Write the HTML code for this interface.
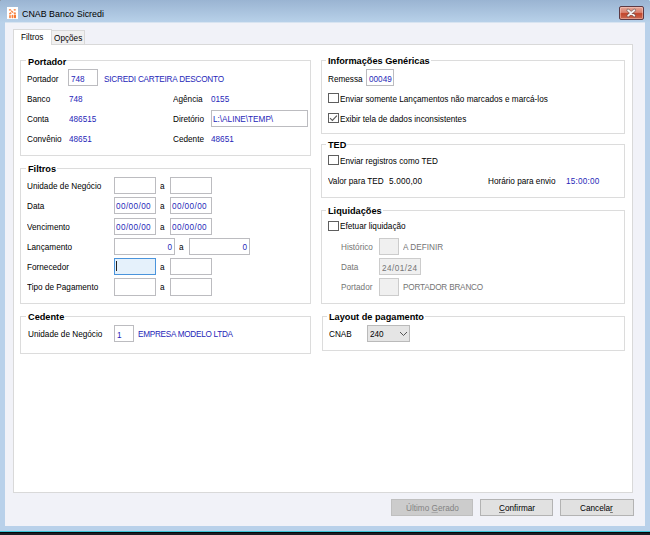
<!DOCTYPE html>
<html><head><meta charset="utf-8"><style>
html,body{margin:0;padding:0;width:650px;height:535px;overflow:hidden;background:#b9d1ea;}
body{position:relative;font-family:"Liberation Sans",sans-serif;}
div,svg{position:absolute;}
</style></head><body>
<div style="position:absolute;left:0px;top:0px;width:650px;height:23px;background:linear-gradient(#9ab4d2,#b9d2ea);"></div>
<div style="position:absolute;left:0px;top:23px;width:650px;height:512px;background:#b9d1ea;"></div>
<div style="position:absolute;left:5px;top:22px;width:640px;height:1px;background:#d8e4f1;"></div>
<div style="position:absolute;left:5px;top:23px;width:640px;height:503px;background:#f1f2f8;"></div>
<div style="position:absolute;left:0px;top:531px;width:650px;height:1px;background:#3cc6d8;"></div>
<div style="position:absolute;left:0px;top:0px;width:1px;height:1px;background:#8d98a6;"></div>
<div style="position:absolute;left:649px;top:0px;width:1px;height:1px;background:#b5e2ef;"></div>
<div style="position:absolute;left:0px;top:532px;width:650px;height:3px;background:#1b1e24;"></div>
<div style="position:absolute;left:0px;top:532px;width:650px;height:1px;background:#0a0508;"></div>
<div style="position:absolute;left:7px;top:7px;width:11px;height:12px;background:#fff;"></div>
<svg style="position:absolute;left:7px;top:7px" width="11" height="12"><g fill="#f7742a"><ellipse cx="3" cy="2.8" rx="1.2" ry="0.9" opacity="0.8"/><ellipse cx="7.8" cy="2.8" rx="1.2" ry="0.9" opacity="0.8"/><path d="M4.6 3.2 L6.6 5.2 L5.6 6 L3.8 4.2Z" opacity="0.9"/><path d="M2 6.2 L4 5 L4.6 6.6 L2.6 7.8Z" opacity="0.9"/><ellipse cx="7.8" cy="6.2" rx="1.2" ry="1" opacity="0.85"/><rect x="2" y="8" width="2" height="3.3" rx="0.8" opacity="0.75"/><rect x="4.6" y="7.8" width="1.8" height="3.5" rx="0.8" opacity="0.9"/><rect x="7" y="7.6" width="2" height="3.7" rx="0.8"/></g></svg>
<div style="position:absolute;left:22px;top:9.97px;font-size:8.9px;line-height:8.9px;color:#000;font-weight:normal;white-space:nowrap;transform:scaleX(1);transform-origin:0 0;letter-spacing:0px;">CNAB Banco Sicredi</div>
<div style="position:absolute;left:619px;top:6px;width:25px;height:14px;box-sizing:border-box;border:1px solid #5c3a44;border-radius:2px;box-shadow:inset 0 0 0 1px rgba(255,215,205,0.45);background:linear-gradient(#e5a598 0%,#d9826f 45%,#c2452b 55%,#cb6a52 100%);"></div>
<svg style="position:absolute;left:619px;top:6px" width="25" height="14"><path d="M9 4.2 L15.5 9.8 M15.5 4.2 L9 9.8" stroke="#555" stroke-width="3.2" stroke-linecap="round" opacity="0.55"/><path d="M9.2 4.4 L15.3 9.6 M15.3 4.4 L9.2 9.6" stroke="#f4f4f4" stroke-width="1.9" stroke-linecap="round"/></svg>
<div style="position:absolute;left:13px;top:44px;width:620px;height:449px;box-sizing:border-box;background:#fff;border:1px solid #d9d9d9;"></div>
<div style="position:absolute;left:51px;top:30px;width:34px;height:15px;box-sizing:border-box;background:#f0f0f0;border:1px solid #d9d9d9;"></div>
<div style="position:absolute;left:13px;top:29px;width:39px;height:16px;box-sizing:border-box;background:#fff;border:1px solid #d9d9d9;border-bottom:none;"></div>
<div style="position:absolute;left:21px;top:32.55px;font-size:8.8px;line-height:8.8px;color:#000;font-weight:normal;white-space:nowrap;transform:scaleX(0.932);transform-origin:0 0;letter-spacing:0px;">Filtros</div>
<div style="position:absolute;left:54px;top:34.05px;font-size:8.8px;line-height:8.8px;color:#000;font-weight:normal;white-space:nowrap;transform:scaleX(0.932);transform-origin:0 0;letter-spacing:0px;">Opções</div>
<div style="position:absolute;left:20px;top:60px;width:291px;height:96px;box-sizing:border-box;background:transparent;border:1px solid #dcdcdc;"></div>
<div style="position:absolute;left:26px;top:57.71px;font-size:9.2px;line-height:9.2px;color:#000;font-weight:bold;white-space:nowrap;transform:scaleX(1);transform-origin:0 0;letter-spacing:0px;background:#fff;padding:0 1px 0 2px;">Portador</div>
<div style="position:absolute;left:27px;top:74.55px;font-size:8.8px;line-height:8.8px;color:#000;font-weight:normal;white-space:nowrap;transform:scaleX(0.932);transform-origin:0 0;letter-spacing:0px;">Portador</div>
<div style="position:absolute;left:68px;top:69px;width:30px;height:17px;box-sizing:border-box;background:#fff;border:1px solid #bcbcc0;"></div>
<div style="position:absolute;left:71px;top:74.81px;font-size:9.2px;line-height:9.2px;color:#2626b8;font-weight:normal;white-space:nowrap;transform:scaleX(0.891);transform-origin:0 0;letter-spacing:0px;">748</div>
<div style="position:absolute;left:104px;top:74.55px;font-size:8.8px;line-height:8.8px;color:#2626b8;font-weight:normal;white-space:nowrap;transform:scaleX(0.932);transform-origin:0 0;letter-spacing:-0.22px;">SICREDI CARTEIRA DESCONTO</div>
<div style="position:absolute;left:27px;top:94.55px;font-size:8.8px;line-height:8.8px;color:#000;font-weight:normal;white-space:nowrap;transform:scaleX(0.932);transform-origin:0 0;letter-spacing:0px;">Banco</div>
<div style="position:absolute;left:69px;top:94.81px;font-size:9.2px;line-height:9.2px;color:#2626b8;font-weight:normal;white-space:nowrap;transform:scaleX(0.891);transform-origin:0 0;letter-spacing:0px;">748</div>
<div style="position:absolute;left:27px;top:114.55px;font-size:8.8px;line-height:8.8px;color:#000;font-weight:normal;white-space:nowrap;transform:scaleX(0.932);transform-origin:0 0;letter-spacing:0px;">Conta</div>
<div style="position:absolute;left:69px;top:114.81px;font-size:9.2px;line-height:9.2px;color:#2626b8;font-weight:normal;white-space:nowrap;transform:scaleX(0.891);transform-origin:0 0;letter-spacing:0px;">486515</div>
<div style="position:absolute;left:27px;top:134.55px;font-size:8.8px;line-height:8.8px;color:#000;font-weight:normal;white-space:nowrap;transform:scaleX(0.932);transform-origin:0 0;letter-spacing:0px;">Convênio</div>
<div style="position:absolute;left:69px;top:134.81px;font-size:9.2px;line-height:9.2px;color:#2626b8;font-weight:normal;white-space:nowrap;transform:scaleX(0.891);transform-origin:0 0;letter-spacing:0px;">48651</div>
<div style="position:absolute;left:173px;top:94.55px;font-size:8.8px;line-height:8.8px;color:#000;font-weight:normal;white-space:nowrap;transform:scaleX(0.932);transform-origin:0 0;letter-spacing:0px;">Agência</div>
<div style="position:absolute;left:211px;top:94.81px;font-size:9.2px;line-height:9.2px;color:#2626b8;font-weight:normal;white-space:nowrap;transform:scaleX(0.891);transform-origin:0 0;letter-spacing:0px;">0155</div>
<div style="position:absolute;left:173px;top:114.55px;font-size:8.8px;line-height:8.8px;color:#000;font-weight:normal;white-space:nowrap;transform:scaleX(0.932);transform-origin:0 0;letter-spacing:0px;">Diretório</div>
<div style="position:absolute;left:211px;top:110px;width:97px;height:17px;box-sizing:border-box;background:#fff;border:1px solid #bcbcc0;"></div>
<div style="position:absolute;left:212.5px;top:115.15px;font-size:8.8px;line-height:8.8px;color:#2626b8;font-weight:normal;white-space:nowrap;transform:scaleX(0.932);transform-origin:0 0;letter-spacing:0px;">L:\ALINE\TEMP\</div>
<div style="position:absolute;left:173px;top:134.55px;font-size:8.8px;line-height:8.8px;color:#000;font-weight:normal;white-space:nowrap;transform:scaleX(0.932);transform-origin:0 0;letter-spacing:0px;">Cedente</div>
<div style="position:absolute;left:211px;top:134.81px;font-size:9.2px;line-height:9.2px;color:#2626b8;font-weight:normal;white-space:nowrap;transform:scaleX(0.891);transform-origin:0 0;letter-spacing:0px;">48651</div>
<div style="position:absolute;left:20px;top:168px;width:291px;height:136px;box-sizing:border-box;background:transparent;border:1px solid #dcdcdc;"></div>
<div style="position:absolute;left:26px;top:164.71px;font-size:9.2px;line-height:9.2px;color:#000;font-weight:bold;white-space:nowrap;transform:scaleX(1);transform-origin:0 0;letter-spacing:0px;background:#fff;padding:0 1px 0 2px;">Filtros</div>
<div style="position:absolute;left:27px;top:181.55px;font-size:8.8px;line-height:8.8px;color:#000;font-weight:normal;white-space:nowrap;transform:scaleX(0.932);transform-origin:0 0;letter-spacing:0px;">Unidade de Negócio</div>
<div style="position:absolute;left:114px;top:177px;width:42px;height:17px;box-sizing:border-box;background:#fff;border:1px solid #bcbcc0;"></div>
<div style="position:absolute;left:160px;top:181.55px;font-size:8.8px;line-height:8.8px;color:#000;font-weight:normal;white-space:nowrap;transform:scaleX(0.932);transform-origin:0 0;letter-spacing:0px;">a</div>
<div style="position:absolute;left:170px;top:177px;width:42px;height:17px;box-sizing:border-box;background:#fff;border:1px solid #bcbcc0;"></div>
<div style="position:absolute;left:27px;top:201.55px;font-size:8.8px;line-height:8.8px;color:#000;font-weight:normal;white-space:nowrap;transform:scaleX(0.932);transform-origin:0 0;letter-spacing:0px;">Data</div>
<div style="position:absolute;left:114px;top:197px;width:42px;height:17px;box-sizing:border-box;background:#fff;border:1px solid #bcbcc0;"></div>
<div style="position:absolute;left:160px;top:201.55px;font-size:8.8px;line-height:8.8px;color:#000;font-weight:normal;white-space:nowrap;transform:scaleX(0.932);transform-origin:0 0;letter-spacing:0px;">a</div>
<div style="position:absolute;left:170px;top:197px;width:42px;height:17px;box-sizing:border-box;background:#fff;border:1px solid #bcbcc0;"></div>
<div style="position:absolute;left:115.6px;top:202.31px;font-size:9.2px;line-height:9.2px;color:#2626b8;font-weight:normal;white-space:nowrap;transform:scaleX(0.891);transform-origin:0 0;letter-spacing:0.45px;">00/00/00</div>
<div style="position:absolute;left:172px;top:202.31px;font-size:9.2px;line-height:9.2px;color:#2626b8;font-weight:normal;white-space:nowrap;transform:scaleX(0.891);transform-origin:0 0;letter-spacing:0.45px;">00/00/00</div>
<div style="position:absolute;left:27px;top:222.55px;font-size:8.8px;line-height:8.8px;color:#000;font-weight:normal;white-space:nowrap;transform:scaleX(0.932);transform-origin:0 0;letter-spacing:0px;">Vencimento</div>
<div style="position:absolute;left:114px;top:218px;width:42px;height:17px;box-sizing:border-box;background:#fff;border:1px solid #bcbcc0;"></div>
<div style="position:absolute;left:160px;top:222.55px;font-size:8.8px;line-height:8.8px;color:#000;font-weight:normal;white-space:nowrap;transform:scaleX(0.932);transform-origin:0 0;letter-spacing:0px;">a</div>
<div style="position:absolute;left:170px;top:218px;width:42px;height:17px;box-sizing:border-box;background:#fff;border:1px solid #bcbcc0;"></div>
<div style="position:absolute;left:115.6px;top:223.31px;font-size:9.2px;line-height:9.2px;color:#2626b8;font-weight:normal;white-space:nowrap;transform:scaleX(0.891);transform-origin:0 0;letter-spacing:0.45px;">00/00/00</div>
<div style="position:absolute;left:172px;top:223.31px;font-size:9.2px;line-height:9.2px;color:#2626b8;font-weight:normal;white-space:nowrap;transform:scaleX(0.891);transform-origin:0 0;letter-spacing:0.45px;">00/00/00</div>
<div style="position:absolute;left:27px;top:242.55px;font-size:8.8px;line-height:8.8px;color:#000;font-weight:normal;white-space:nowrap;transform:scaleX(0.932);transform-origin:0 0;letter-spacing:0px;">Lançamento</div>
<div style="position:absolute;left:114px;top:238px;width:61px;height:17px;box-sizing:border-box;background:#fff;border:1px solid #bcbcc0;"></div>
<div style="position:absolute;right:477.5px;top:242.81px;font-size:9.2px;line-height:9.2px;color:#2626b8;font-weight:normal;white-space:nowrap;transform:scaleX(0.891);transform-origin:100% 0;letter-spacing:0px;">0</div>
<div style="position:absolute;left:179px;top:242.55px;font-size:8.8px;line-height:8.8px;color:#000;font-weight:normal;white-space:nowrap;transform:scaleX(0.932);transform-origin:0 0;letter-spacing:0px;">a</div>
<div style="position:absolute;left:189px;top:238px;width:61px;height:17px;box-sizing:border-box;background:#fff;border:1px solid #bcbcc0;"></div>
<div style="position:absolute;right:402.5px;top:242.81px;font-size:9.2px;line-height:9.2px;color:#2626b8;font-weight:normal;white-space:nowrap;transform:scaleX(0.891);transform-origin:100% 0;letter-spacing:0px;">0</div>
<div style="position:absolute;left:27px;top:262.55px;font-size:8.8px;line-height:8.8px;color:#000;font-weight:normal;white-space:nowrap;transform:scaleX(0.932);transform-origin:0 0;letter-spacing:0px;">Fornecedor</div>
<div style="position:absolute;left:114px;top:258px;width:42px;height:17px;box-sizing:border-box;background:#e5f1fb;border:1px solid #4a94dc;"></div>
<div style="position:absolute;left:116px;top:261px;width:1px;height:10px;background:#222;"></div>
<div style="position:absolute;left:160px;top:262.55px;font-size:8.8px;line-height:8.8px;color:#000;font-weight:normal;white-space:nowrap;transform:scaleX(0.932);transform-origin:0 0;letter-spacing:0px;">a</div>
<div style="position:absolute;left:170px;top:258px;width:42px;height:17px;box-sizing:border-box;background:#fff;border:1px solid #bcbcc0;"></div>
<div style="position:absolute;left:27px;top:282.55px;font-size:8.8px;line-height:8.8px;color:#000;font-weight:normal;white-space:nowrap;transform:scaleX(0.932);transform-origin:0 0;letter-spacing:0px;">Tipo de Pagamento</div>
<div style="position:absolute;left:114px;top:278px;width:42px;height:18px;box-sizing:border-box;background:#fff;border:1px solid #bcbcc0;"></div>
<div style="position:absolute;left:160px;top:282.55px;font-size:8.8px;line-height:8.8px;color:#000;font-weight:normal;white-space:nowrap;transform:scaleX(0.932);transform-origin:0 0;letter-spacing:0px;">a</div>
<div style="position:absolute;left:170px;top:278px;width:42px;height:18px;box-sizing:border-box;background:#fff;border:1px solid #bcbcc0;"></div>
<div style="position:absolute;left:20px;top:316px;width:291px;height:38px;box-sizing:border-box;background:transparent;border:1px solid #dcdcdc;"></div>
<div style="position:absolute;left:26px;top:312.71px;font-size:9.2px;line-height:9.2px;color:#000;font-weight:bold;white-space:nowrap;transform:scaleX(1);transform-origin:0 0;letter-spacing:0px;background:#fff;padding:0 1px 0 2px;">Cedente</div>
<div style="position:absolute;left:28px;top:329.55px;font-size:8.8px;line-height:8.8px;color:#000;font-weight:normal;white-space:nowrap;transform:scaleX(0.932);transform-origin:0 0;letter-spacing:0px;">Unidade de Negócio</div>
<div style="position:absolute;left:114px;top:325px;width:20px;height:17px;box-sizing:border-box;background:#fff;border:1px solid #bcbcc0;"></div>
<div style="position:absolute;left:117px;top:330.81px;font-size:9.2px;line-height:9.2px;color:#2626b8;font-weight:normal;white-space:nowrap;transform:scaleX(0.891);transform-origin:0 0;letter-spacing:0px;">1</div>
<div style="position:absolute;left:137.5px;top:329.55px;font-size:8.8px;line-height:8.8px;color:#2626b8;font-weight:normal;white-space:nowrap;transform:scaleX(0.932);transform-origin:0 0;letter-spacing:-0.3px;">EMPRESA MODELO LTDA</div>
<div style="position:absolute;left:321px;top:60px;width:304px;height:74px;box-sizing:border-box;background:transparent;border:1px solid #dcdcdc;"></div>
<div style="position:absolute;left:326px;top:56.71px;font-size:9.2px;line-height:9.2px;color:#000;font-weight:bold;white-space:nowrap;transform:scaleX(1);transform-origin:0 0;letter-spacing:0px;background:#fff;padding:0 1px 0 2px;">Informações Genéricas</div>
<div style="position:absolute;left:328px;top:74.55px;font-size:8.8px;line-height:8.8px;color:#000;font-weight:normal;white-space:nowrap;transform:scaleX(0.932);transform-origin:0 0;letter-spacing:0px;">Remessa</div>
<div style="position:absolute;left:366px;top:69px;width:28px;height:17px;box-sizing:border-box;background:#fff;border:1px solid #bcbcc0;"></div>
<div style="position:absolute;left:369px;top:75.21px;font-size:9.2px;line-height:9.2px;color:#2626b8;font-weight:normal;white-space:nowrap;transform:scaleX(0.891);transform-origin:0 0;letter-spacing:0px;">00049</div>
<div style="position:absolute;left:328px;top:93px;width:11px;height:10px;box-sizing:border-box;background:#fff;border:1px solid #5e5e5e;"></div>
<div style="position:absolute;left:340px;top:94.55px;font-size:8.8px;line-height:8.8px;color:#000;font-weight:normal;white-space:nowrap;transform:scaleX(0.932);transform-origin:0 0;letter-spacing:0px;">Enviar somente Lançamentos não marcados e marcá-los</div>
<div style="position:absolute;left:328px;top:113px;width:11px;height:10px;box-sizing:border-box;background:#fff;border:1px solid #5e5e5e;"></div>
<svg style="position:absolute;left:328px;top:113px" width="11" height="10"><path d="M2 5.2 L4.4 7.5 L8.9 2.6" fill="none" stroke="#5a5a5a" stroke-width="1.15"/></svg>
<div style="position:absolute;left:340px;top:114.55px;font-size:8.8px;line-height:8.8px;color:#000;font-weight:normal;white-space:nowrap;transform:scaleX(0.932);transform-origin:0 0;letter-spacing:0px;">Exibir tela de dados inconsistentes</div>
<div style="position:absolute;left:321px;top:144px;width:304px;height:54px;box-sizing:border-box;background:transparent;border:1px solid #dcdcdc;"></div>
<div style="position:absolute;left:326px;top:140.71px;font-size:9.2px;line-height:9.2px;color:#000;font-weight:bold;white-space:nowrap;transform:scaleX(1);transform-origin:0 0;letter-spacing:0px;background:#fff;padding:0 1px 0 2px;">TED</div>
<div style="position:absolute;left:328px;top:155px;width:11px;height:10px;box-sizing:border-box;background:#fff;border:1px solid #5e5e5e;"></div>
<div style="position:absolute;left:340px;top:156.55px;font-size:8.8px;line-height:8.8px;color:#000;font-weight:normal;white-space:nowrap;transform:scaleX(0.932);transform-origin:0 0;letter-spacing:0px;">Enviar registros como TED</div>
<div style="position:absolute;left:328px;top:176.55px;font-size:8.8px;line-height:8.8px;color:#000;font-weight:normal;white-space:nowrap;transform:scaleX(0.932);transform-origin:0 0;letter-spacing:0px;">Valor para TED</div>
<div style="position:absolute;left:389px;top:176.81px;font-size:9.2px;line-height:9.2px;color:#000;font-weight:normal;white-space:nowrap;transform:scaleX(0.891);transform-origin:0 0;letter-spacing:0.2px;">5.000,00</div>
<div style="position:absolute;left:488px;top:176.55px;font-size:8.8px;line-height:8.8px;color:#000;font-weight:normal;white-space:nowrap;transform:scaleX(0.932);transform-origin:0 0;letter-spacing:0px;">Horário para envio</div>
<div style="position:absolute;left:566px;top:176.81px;font-size:9.2px;line-height:9.2px;color:#2626b8;font-weight:normal;white-space:nowrap;transform:scaleX(0.891);transform-origin:0 0;letter-spacing:0.25px;">15:00:00</div>
<div style="position:absolute;left:321px;top:210px;width:304px;height:94px;box-sizing:border-box;background:transparent;border:1px solid #dcdcdc;"></div>
<div style="position:absolute;left:326px;top:206.71px;font-size:9.2px;line-height:9.2px;color:#000;font-weight:bold;white-space:nowrap;transform:scaleX(1);transform-origin:0 0;letter-spacing:0px;background:#fff;padding:0 1px 0 2px;">Liquidações</div>
<div style="position:absolute;left:328px;top:221px;width:11px;height:10px;box-sizing:border-box;background:#fff;border:1px solid #5e5e5e;"></div>
<div style="position:absolute;left:340px;top:222.05px;font-size:8.8px;line-height:8.8px;color:#000;font-weight:normal;white-space:nowrap;transform:scaleX(0.932);transform-origin:0 0;letter-spacing:0px;">Efetuar liquidação</div>
<div style="position:absolute;left:341px;top:242.55px;font-size:8.8px;line-height:8.8px;color:#747474;font-weight:normal;white-space:nowrap;transform:scaleX(0.932);transform-origin:0 0;letter-spacing:0px;">Histórico</div>
<div style="position:absolute;left:379px;top:238px;width:20px;height:17px;box-sizing:border-box;background:#f0f0f0;border:1px solid #cccccc;"></div>
<div style="position:absolute;left:403px;top:242.55px;font-size:8.8px;line-height:8.8px;color:#747474;font-weight:normal;white-space:nowrap;transform:scaleX(0.932);transform-origin:0 0;letter-spacing:0px;">A DEFINIR</div>
<div style="position:absolute;left:341px;top:262.55px;font-size:8.8px;line-height:8.8px;color:#747474;font-weight:normal;white-space:nowrap;transform:scaleX(0.932);transform-origin:0 0;letter-spacing:0px;">Data</div>
<div style="position:absolute;left:379px;top:258px;width:42px;height:17px;box-sizing:border-box;background:#f0f0f0;border:1px solid #cccccc;"></div>
<div style="position:absolute;left:381.5px;top:264.31px;font-size:9.2px;line-height:9.2px;color:#747474;font-weight:normal;white-space:nowrap;transform:scaleX(0.891);transform-origin:0 0;letter-spacing:0.5px;">24/01/24</div>
<div style="position:absolute;left:341px;top:282.55px;font-size:8.8px;line-height:8.8px;color:#747474;font-weight:normal;white-space:nowrap;transform:scaleX(0.932);transform-origin:0 0;letter-spacing:0px;">Portador</div>
<div style="position:absolute;left:379px;top:278px;width:20px;height:18px;box-sizing:border-box;background:#f0f0f0;border:1px solid #cccccc;"></div>
<div style="position:absolute;left:403px;top:283.05px;font-size:8.8px;line-height:8.8px;color:#747474;font-weight:normal;white-space:nowrap;transform:scaleX(0.932);transform-origin:0 0;letter-spacing:-0.22px;">PORTADOR BRANCO</div>
<div style="position:absolute;left:322px;top:316px;width:303px;height:35px;box-sizing:border-box;background:transparent;border:1px solid #dcdcdc;"></div>
<div style="position:absolute;left:327px;top:312.71px;font-size:9.2px;line-height:9.2px;color:#000;font-weight:bold;white-space:nowrap;transform:scaleX(1);transform-origin:0 0;letter-spacing:0px;background:#fff;padding:0 1px 0 2px;">Layout de pagamento</div>
<div style="position:absolute;left:329px;top:329.55px;font-size:8.8px;line-height:8.8px;color:#000;font-weight:normal;white-space:nowrap;transform:scaleX(0.932);transform-origin:0 0;letter-spacing:0px;">CNAB</div>
<div style="position:absolute;left:367px;top:325px;width:43px;height:17px;box-sizing:border-box;background:#e5e5e5;border:1px solid #bababa;"></div>
<div style="position:absolute;left:370px;top:330.31px;font-size:9.2px;line-height:9.2px;color:#000;font-weight:normal;white-space:nowrap;transform:scaleX(0.891);transform-origin:0 0;letter-spacing:0px;">240</div>
<svg style="position:absolute;left:398px;top:329px" width="10" height="8"><path d="M2 3 L5.5 6.5 L9 3" fill="none" stroke="#555" stroke-width="1"/></svg>
<div style="position:absolute;left:391px;top:499px;width:82px;height:17px;box-sizing:border-box;background:#cccccc;border:1px solid #bfbfbf;"></div>
<div style="position:absolute;left:406px;top:503.55px;font-size:8.8px;line-height:8.8px;color:#838383;font-weight:normal;white-space:nowrap;transform:scaleX(0.932);transform-origin:0 0;letter-spacing:0px;">Último <u style="text-decoration-color:#aaa">G</u>erado</div>
<div style="position:absolute;left:480px;top:499px;width:73px;height:17px;box-sizing:border-box;background:#e1e1e1;border:1px solid #b3b3b3;"></div>
<div style="position:absolute;left:499px;top:503.55px;font-size:8.8px;line-height:8.8px;color:#000;font-weight:normal;white-space:nowrap;transform:scaleX(0.932);transform-origin:0 0;letter-spacing:0px;"><u style="text-decoration-color:#777">C</u>onfirmar</div>
<div style="position:absolute;left:560px;top:499px;width:74px;height:17px;box-sizing:border-box;background:#e1e1e1;border:1px solid #b3b3b3;"></div>
<div style="position:absolute;left:580px;top:503.55px;font-size:8.8px;line-height:8.8px;color:#000;font-weight:normal;white-space:nowrap;transform:scaleX(0.932);transform-origin:0 0;letter-spacing:0px;">Cancela<u style="text-decoration-color:#777">r</u></div>
</body></html>
